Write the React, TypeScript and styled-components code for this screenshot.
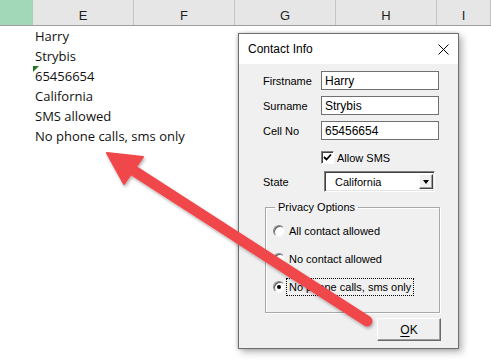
import React from 'react';
import styled, { createGlobalStyle } from 'styled-components';

const GlobalStyle = createGlobalStyle`
  html, body {
    margin: 0;
    padding: 0;
    background: #ffffff;
  }
  body {
    overflow: hidden;
  }
`;

const Page = styled.div`
  position: relative;
  width: 491px;
  height: 364px;
  overflow: hidden;
  background: #ffffff;
`;

const Sheet = styled.div`
  display: flex;
  flex-direction: column;
`;

const HeaderRow = styled.div`
  display: grid;
  grid-template-columns: 33px 101px 101px 101px 101px 1fr;
  height: 25px;
  background: #e6e6e6;
  border-bottom: 1px solid #9e9e9e;
`;

const HeaderCell = styled.div<{ selected?: boolean }>`
  display: flex;
  justify-content: center;
  align-items: center;
  padding-top: 5px;
  box-sizing: border-box;
  border-right: 1px solid ${({ selected }) => (selected ? '#9fd3b3' : '#c4c4c4')};
  background: ${({ selected }) => (selected ? '#a2d7b8' : 'transparent')};
  font-family: 'Liberation Sans', Arial, sans-serif;
  font-size: 13px;
  color: #1e1e1e;
`;

const Row = styled.div`
  display: grid;
  grid-template-columns: 33px 1fr;
  height: 20px;
`;

const Cell = styled.div<{ flagged?: boolean }>`
  position: relative;
  display: flex;
  align-items: center;
  padding-left: 2px;
  font-family: 'Open Sans', 'Liberation Sans', sans-serif;
  font-size: 13px;
  color: #111111;
  white-space: nowrap;

  &::before {
    content: '';
    display: ${({ flagged }) => (flagged ? 'block' : 'none')};
    position: absolute;
    left: 0;
    top: 0;
    border-top: 6px solid #1f7a1f;
    border-right: 6px solid transparent;
  }
`;

const Dialog = styled.div`
  position: absolute;
  left: 238px;
  top: 33px;
  width: 221px;
  height: 316px;
  box-sizing: border-box;
  border: 1px solid #6e6e6e;
  background: #f0f0f0;
  box-shadow: 3px 3px 7px rgba(0, 0, 0, 0.3), -1px 0 3px rgba(0, 0, 0, 0.18);
  display: flex;
  flex-direction: column;
  font-family: 'Liberation Sans', Arial, sans-serif;
  font-size: 11px;
  color: #000000;
`;

const TitleBar = styled.div`
  height: 30px;
  background: #ffffff;
  display: flex;
  align-items: center;
  justify-content: space-between;
  padding: 0 8px 0 9px;
  font-size: 12px;
`;

const CloseIcon = styled.svg`
  width: 11px;
  height: 11px;
  margin-right: 1px;
`;

const Body = styled.div`
  flex: 1;
  display: flex;
  flex-direction: column;
  padding: 7px 17px 7px 24px;
`;

const FieldRow = styled.div`
  display: grid;
  grid-template-columns: 58px 118px;
  align-items: center;
  margin-bottom: 6px;
`;

const TextBox = styled.div`
  height: 19px;
  box-sizing: border-box;
  border: 1px solid #707070;
  background: #ffffff;
  padding: 0 3px;
  display: flex;
  align-items: center;
  font-size: 12px;
`;

const CheckRow = styled.label`
  display: flex;
  align-items: center;
  gap: 3px;
  margin: 5px 0 0 58px;
`;

const CheckBox = styled.span`
  width: 13px;
  height: 13px;
  box-sizing: border-box;
  border: 1px solid;
  border-color: #808080 #ffffff #ffffff #808080;
  box-shadow: inset 1px 1px 0 #404040;
  background: #ffffff;
  display: flex;
  align-items: center;
  justify-content: center;
`;

const StateRow = styled.div`
  display: grid;
  grid-template-columns: 61px 111px;
  align-items: center;
  margin-top: 7px;
`;

const Combo = styled.div`
  height: 21px;
  box-sizing: border-box;
  border: 1px solid;
  border-color: #808080 #ffffff #ffffff #808080;
  box-shadow: inset 1px 1px 0 #404040, inset -1px -1px 0 #e3e3e3;
  background: #ffffff;
  display: flex;
  align-items: center;
  justify-content: space-between;
  padding: 0 1px 0 10px;
`;

const DropButton = styled.span`
  width: 14px;
  height: 15px;
  box-sizing: border-box;
  background: #f0f0f0;
  border: 1px solid;
  border-color: #ffffff #404040 #404040 #ffffff;
  box-shadow: inset -1px -1px 0 #a0a0a0;
  display: flex;
  align-items: center;
  justify-content: center;

  &::after {
    content: '';
    border-top: 4px solid #000;
    border-left: 3.5px solid transparent;
    border-right: 3.5px solid transparent;
  }
`;

const Frame = styled.fieldset`
  margin: 9px 0 0 2px;
  width: 175px;
  height: 112px;
  box-sizing: border-box;
  padding: 11px 0 0 7px;
  border: 1px solid #a8a8a8;
  box-shadow: 1px 1px 0 #ffffff, inset 1px 1px 0 #ffffff;
  display: flex;
  flex-direction: column;
  gap: 16px;
`;

const Legend = styled.legend`
  padding: 0 3px;
  margin-left: 2px;
  font-size: 11px;
  line-height: 13px;
`;

const RadioRow = styled.label`
  display: flex;
  align-items: center;
  height: 12px;
  gap: 3px;
  font-size: 11px;
`;

const RadioDot = styled.span<{ checked?: boolean }>`
  width: 12px;
  height: 12px;
  box-sizing: border-box;
  border-radius: 50%;
  border: 1px solid;
  border-color: #8c8c8c #f4f4f4 #f4f4f4 #8c8c8c;
  box-shadow: inset 1px 1px 0 #5a5a5a;
  background: #ffffff;
  display: flex;
  align-items: center;
  justify-content: center;

  &::after {
    content: '';
    display: ${({ checked }) => (checked ? 'block' : 'none')};
    width: 4px;
    height: 4px;
    border-radius: 50%;
    background: #000;
  }
`;

const RadioLabel = styled.span<{ focused?: boolean }>`
  padding: 1px 1px;
  outline: ${({ focused }) => (focused ? '1px dotted #000' : 'none')};
  outline-offset: 1px;
  white-space: nowrap;
`;

const Footer = styled.div`
  margin-top: auto;
  display: flex;
  justify-content: flex-end;
`;

const OkButton = styled.div`
  width: 64px;
  height: 23px;
  box-sizing: border-box;
  background: #f0f0f0;
  border: 1px solid;
  border-color: #ffffff #696969 #696969 #ffffff;
  box-shadow: inset -1px -1px 0 #a0a0a0;
  display: flex;
  align-items: center;
  justify-content: center;
  font-size: 12px;

  u {
    text-decoration: underline;
    text-underline-offset: 2px;
  }
`;

const ArrowLayer = styled.svg`
  position: absolute;
  left: 0;
  top: 0;
  pointer-events: none;
`;

const cells = [
  'Harry',
  'Strybis',
  '65456654',
  'California',
  'SMS allowed',
  'No phone calls, sms only',
];

const radios = [
  { label: 'All contact allowed', checked: false },
  { label: 'No contact allowed', checked: false },
  { label: 'No phone calls, sms only', checked: true },
];

const fields = [
  { label: 'Firstname', value: 'Harry' },
  { label: 'Surname', value: 'Strybis' },
  { label: 'Cell No', value: '65456654' },
];

export default function App() {
  return (
    <Page>
      <GlobalStyle />
      <Sheet>
        <HeaderRow>
          <HeaderCell selected />
          {['E', 'F', 'G', 'H', 'I'].map((c) => (
            <HeaderCell key={c}>{c}</HeaderCell>
          ))}
        </HeaderRow>
        {cells.map((text, i) => (
          <Row key={text}>
            <span />
            <Cell flagged={i === 2}>{text}</Cell>
          </Row>
        ))}
      </Sheet>

      <Dialog>
        <TitleBar>
          <span>Contact Info</span>
          <CloseIcon viewBox="0 0 11 11">
            <path d="M0.5 0.5 L10.5 10.5 M10.5 0.5 L0.5 10.5" stroke="#000" strokeWidth="1" />
          </CloseIcon>
        </TitleBar>
        <Body>
          {fields.map((f) => (
            <FieldRow key={f.label}>
              <span>{f.label}</span>
              <TextBox>{f.value}</TextBox>
            </FieldRow>
          ))}
          <CheckRow>
            <CheckBox>
              <svg width="9" height="9" viewBox="0 0 9 9">
                <path d="M1 4 L3.5 6.5 L8 1.5" stroke="#000" strokeWidth="1.8" fill="none" />
              </svg>
            </CheckBox>
            <span>Allow SMS</span>
          </CheckRow>
          <StateRow>
            <span>State</span>
            <Combo>
              <span>California</span>
              <DropButton />
            </Combo>
          </StateRow>
          <Frame>
            <Legend>Privacy Options</Legend>
            {radios.map((r) => (
              <RadioRow key={r.label}>
                <RadioDot checked={r.checked} />
                <RadioLabel focused={r.checked}>{r.label}</RadioLabel>
              </RadioRow>
            ))}
          </Frame>
          <Footer>
            <OkButton>
              <u>O</u>K
            </OkButton>
          </Footer>
        </Body>
      </Dialog>

      <ArrowLayer width="491" height="364" viewBox="0 0 491 364">
        <defs>
          <filter id="arrowShadow" x="-10%" y="-10%" width="130%" height="130%">
            <feDropShadow dx="1" dy="2" stdDeviation="1.5" floodColor="#000" floodOpacity="0.3" />
          </filter>
        </defs>
        <g filter="url(#arrowShadow)" fill="#f0474b" stroke="#f0474b">
          <line x1="128" y1="167" x2="367" y2="321" strokeWidth="11" strokeLinecap="round" />
          <polygon points="107,153 143,157 124,184" strokeWidth="2" strokeLinejoin="round" />
        </g>
      </ArrowLayer>
    </Page>
  );
}
